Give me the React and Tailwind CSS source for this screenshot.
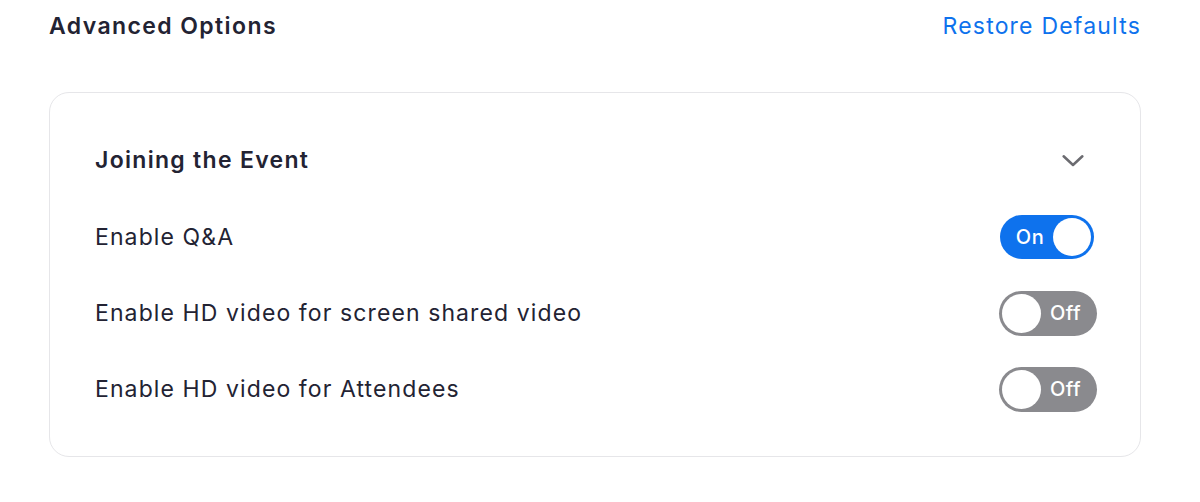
const Toggle = ({ on }) => {
  if (on) {
    return (
      <div className="flex items-center w-[94px] h-[44px] mr-[3px] rounded-full bg-[#0e72ed] p-[3px]">
        <span className="flex-1 text-center text-white text-[20px] font-medium pl-[4px] tracking-[0.5px]">On</span>
        <span className="w-[38px] h-[38px] rounded-full bg-white"></span>
      </div>
    );
  }
  return (
    <div className="flex items-center w-[98px] h-[45px] rounded-full bg-[#8a8a8e] p-[3px]">
      <span className="w-[39px] h-[39px] rounded-full bg-white"></span>
      <span className="flex-1 text-center text-white text-[20px] font-medium pr-[4px] tracking-[0.5px]">Off</span>
    </div>
  );
};

const Row = ({ label, on }) => (
  <div className="flex items-center justify-between h-[76px]">
    <span className="text-[23px] tracking-[1.1px] text-[#232333]">{label}</span>
    <Toggle on={on} />
  </div>
);

export default function App() {
  return (
    <div
      className="w-[1200px] h-[502px] bg-white pl-[49px] pr-[59px]"
      style={{ fontFamily: "Inter, 'Noto Sans', sans-serif" }}
    >
      <div className="flex items-center justify-between h-[53px]">
        <h2 className="text-[23px] font-semibold tracking-[1.4px] text-[#232333]">Advanced Options</h2>
        <a className="text-[23px] tracking-[1.2px] text-[#0e72ed]">Restore Defaults</a>
      </div>
      <div className="mt-[39px] border border-[#e6e6e9] rounded-[20px] pl-[45px] pr-[43px] pt-[45px] pb-[29px]">
        <div className="flex items-center justify-between h-[44px]">
          <h3 className="text-[23px] font-semibold tracking-[1.3px] text-[#232333]">Joining the Event</h3>
          <svg
            className="mr-[9px]"
            width="30"
            height="30"
            viewBox="0 0 24 24"
            fill="none"
            stroke="#6b6b70"
            strokeWidth="2"
            strokeLinecap="round"
            strokeLinejoin="round"
          >
            <path d="M4.5 9l7.5 7 7.5-7" />
          </svg>
        </div>
        <div className="mt-[17px]">
          <Row label="Enable Q&A" on />
          <Row label="Enable HD video for screen shared video" />
          <Row label="Enable HD video for Attendees" />
        </div>
      </div>
    </div>
  );
}
